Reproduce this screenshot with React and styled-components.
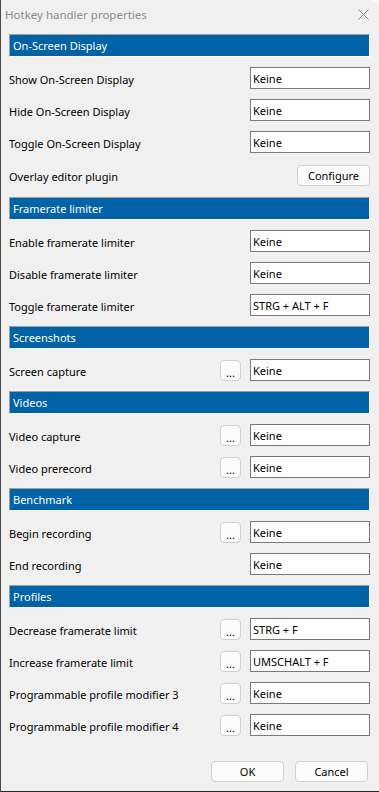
import React from 'react';
import styled, { createGlobalStyle } from 'styled-components';

const GlobalStyle = createGlobalStyle`
  html, body {
    margin: 0;
    padding: 0;
    background: #ffffff;
  }
  body {
    font-family: "Noto Sans", "Open Sans", sans-serif;
    font-size: 11px;
    color: #000;
  }
`;

const Window = styled.div`
  width: 379px;
  height: 792px;
  box-sizing: border-box;
  background: #f0f0f0;
  border-left: 1px solid #4a4a4a;
  border-bottom: 1px solid #2a2a2a;
  border-top-right-radius: 8px;
  display: flex;
  flex-direction: column;
  overflow: hidden;
`;

const TitleBar = styled.div`
  height: 28px;
  display: flex;
  align-items: center;
  justify-content: space-between;
  padding: 0 10px 0 4px;
  color: #8c8c8c;
  font-size: 11.5px;
  flex-shrink: 0;
`;

const Body = styled.div`
  padding: 6px 9px 0 8px;
  display: flex;
  flex-direction: column;
  flex: 1;
`;

const Section = styled.div`
  display: flex;
  flex-direction: column;
  & + & {
    margin-top: 5px;
  }
`;

const SectionHeader = styled.div`
  height: 23px;
  box-sizing: border-box;
  background: #0063a8;
  border-top: 1px solid #a0a0a0;
  border-left: 1px solid #a0a0a0;
  border-bottom: 1px solid #ffffff;
  border-right: 1px solid #ffffff;
  color: #ffffff;
  display: flex;
  align-items: center;
  padding-left: 3px;
  margin-bottom: 5px;
`;

const Row = styled.div`
  height: ${(p) => (p.$tall ? 34 : 32)}px;
  display: flex;
  align-items: center;
`;

const Label = styled.div`
  flex: 1;
  padding-top: 2px;
`;

const DotsButton = styled.button`
  width: 21px;
  height: 21px;
  box-sizing: border-box;
  margin-right: 9px;
  padding: 4px 0 0;
  border: 1px solid #d0d0d0;
  border-radius: 4px;
  background: #fbfbfb;
  font-family: inherit;
  font-size: 11px;
  color: #000;
  line-height: 1;
`;

const KeyField = styled.div`
  width: 120px;
  height: 22px;
  box-sizing: border-box;
  border: 1px solid #7a7a7a;
  background: #ffffff;
  display: flex;
  align-items: center;
  padding-left: 2px;
  white-space: nowrap;
`;

const PushButton = styled.button`
  width: ${(p) => p.$w || 73}px;
  height: 21px;
  box-sizing: border-box;
  border: 1px solid #d0d0d0;
  border-radius: 4px;
  background: #fbfbfb;
  font-family: inherit;
  font-size: 11px;
  color: #000;
  padding: 0;
`;

const Footer = styled.div`
  display: flex;
  justify-content: flex-end;
  gap: 11px;
  margin-top: auto;
  padding: 0 2px 9px 0;
`;

const CloseIcon = () => (
  <svg width="11" height="11" viewBox="0 0 11 11">
    <path d="M0.5 0.5L10.5 10.5M10.5 0.5L0.5 10.5" stroke="#8a8a8a" strokeWidth="1" fill="none" />
  </svg>
);

const sections = [
  {
    title: 'On-Screen Display',
    rows: [
      { label: 'Show On-Screen Display', value: 'Keine' },
      { label: 'Hide On-Screen Display', value: 'Keine' },
      { label: 'Toggle On-Screen Display', value: 'Keine' },
      { label: 'Overlay editor plugin', configure: true },
    ],
  },
  {
    title: 'Framerate limiter',
    rows: [
      { label: 'Enable framerate limiter', value: 'Keine' },
      { label: 'Disable framerate limiter', value: 'Keine' },
      { label: 'Toggle framerate limiter', value: 'STRG + ALT + F' },
    ],
  },
  {
    title: 'Screenshots',
    rows: [{ label: 'Screen capture', value: 'Keine', dots: true }],
  },
  {
    title: 'Videos',
    rows: [
      { label: 'Video capture', value: 'Keine', dots: true },
      { label: 'Video prerecord', value: 'Keine', dots: true },
    ],
  },
  {
    title: 'Benchmark',
    rows: [
      { label: 'Begin recording', value: 'Keine', dots: true },
      { label: 'End recording', value: 'Keine' },
    ],
  },
  {
    title: 'Profiles',
    rows: [
      { label: 'Decrease framerate limit', value: 'STRG + F', dots: true },
      { label: 'Increase framerate limit', value: 'UMSCHALT + F', dots: true },
      { label: 'Programmable profile modifier 3', value: 'Keine', dots: true },
      { label: 'Programmable profile modifier 4', value: 'Keine', dots: true },
    ],
  },
];

const App = () => (
  <>
    <GlobalStyle />
    <Window>
      <TitleBar>
        <span>Hotkey handler properties</span>
        <CloseIcon />
      </TitleBar>
      <Body>
        {sections.map((s) => (
          <Section key={s.title}>
            <SectionHeader>{s.title}</SectionHeader>
            {s.rows.map((r) => (
              <Row key={r.label} $tall={r.configure}>
                <Label>{r.label}</Label>
                {r.dots && <DotsButton>...</DotsButton>}
                {r.configure ? (
                  <PushButton $w={73}>Configure</PushButton>
                ) : (
                  <KeyField>{r.value}</KeyField>
                )}
              </Row>
            ))}
          </Section>
        ))}
        <Footer>
          <PushButton>OK</PushButton>
          <PushButton>Cancel</PushButton>
        </Footer>
      </Body>
    </Window>
  </>
);

export default App;
